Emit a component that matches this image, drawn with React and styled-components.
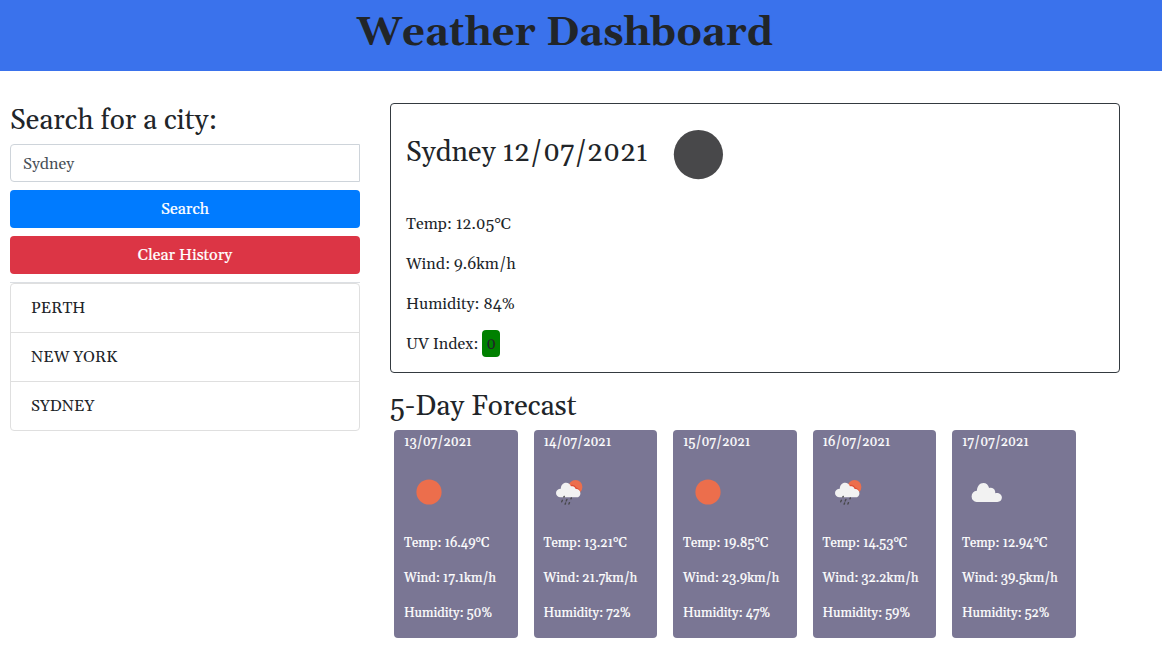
import React from "react";
import styled, { createGlobalStyle } from "styled-components";

const GlobalStyle = createGlobalStyle`
  *, *::before, *::after { box-sizing: border-box; }
  body {
    margin: 0;
    background: #fff;
    color: #212529;
    font-family: Georgia, Gelasio, "Liberation Serif", serif;
    font-size: 16px;
    line-height: 24px;
  }
  h1, h2, p, ul { margin: 0; padding: 0; font-weight: 400; }
`;

const Header = styled.header`
  height: 71px;
  padding: 10px 32px 0 0;
  background: #3a72ec;
  text-align: center;
`;

const Title = styled.h1`
  && { font-weight: 700; }
  font-size: 40px;
  line-height: 48px;
`;

const Layout = styled.main`
  display: flex;
  align-items: flex-start;
  gap: 30px;
  padding: 32px 42px 0 10px;
`;

const Sidebar = styled.aside`
  display: flex;
  flex-direction: column;
  width: 350px;
`;

const Heading = styled.h2`
  font-size: 28px;
  line-height: 34px;
  white-space: nowrap;
`;

const SearchHeading = styled(Heading)`
  margin-top: 1px;
`;

const SearchInput = styled.input`
  height: 38px;
  margin: 6px 0 8px;
  padding: 7px 12px 5px;
  border: 1px solid #ced4da;
  border-radius: 4px 0 0 4px;
  color: #495057;
  font: inherit;
  outline: none;
`;

const Button = styled.button`
  height: 38px;
  margin-bottom: 8px;
  padding: 0;
  border: 0;
  border-radius: 4px;
  background: ${(p) => p.$color};
  color: #fff;
  font: inherit;
  -webkit-text-stroke: 0.2px #fff;
`;

const HistoryWrap = styled.div`
  border-top: 1px solid #dcdfe3;
`;

const History = styled.ul`
  list-style: none;
  border: 1px solid #dfdfdf;
  border-radius: 4px;
`;

const HistoryItem = styled.li`
  height: ${(p) => (p.$last ? 48 : 49)}px;
  padding: 12px 20px;
  border-bottom: ${(p) => (p.$last ? "0" : "1px solid #dfdfdf")};
`;

const Content = styled.section`
  flex: 1;
`;

const Current = styled.article`
  height: 270px;
  padding: 0 15px;
  border: 1px solid #343a40;
  border-radius: 4px;
`;

const CurrentTop = styled.div`
  display: flex;
  align-items: flex-start;
  height: 108px;
`;

const CurrentHeading = styled(Heading)`
  width: 242px;
  margin-top: 32px;
`;

const Line = styled.p`
  margin-bottom: 16px;
`;

const UvBadge = styled.span`
  display: inline-block;
  height: 27px;
  margin: -2px 0;
  padding: 2px 4px;
  border-radius: 4px;
  background: green;
`;

const ForecastHeading = styled(Heading)`
  margin: 17px 0 6px;
`;

const Forecast = styled.div`
  display: flex;
  gap: 16px;
  padding-left: 4px;
`;

const Day = styled.article`
  width: 123.5px;
  height: 208px;
  padding: 2px 10px 0;
  border-radius: 4px;
  background: #7a7694;
  color: #fff;
  font-size: 13px;
  line-height: 21px;
  white-space: nowrap;
  -webkit-text-stroke: 0.2px #fff;
`;

const DayIcon = styled.div`
  height: 50px;
  margin: 14px 0 16px;
`;

const DayLine = styled.p`
  margin-bottom: 14px;
`;

const Svg = styled.svg`
  display: block;
  width: ${(p) => p.$size}px;
  height: ${(p) => p.$size}px;
`;

function WeatherIcon({ kind, size = 50 }) {
  return (
    <Svg viewBox="0 0 50 50" $size={size} aria-hidden="true">
      {kind === "night" && <circle cx="25.2" cy="25.3" r="12.3" fill="#48484a" />}
      {kind === "sun" && <circle cx="25" cy="25" r="12.6" fill="#ec6e4c" />}
      {kind === "cloud" && (
        <path
          d="M14.6 35a5 5.600 0 0 1 0-11.200h.3c.2-4.300 2.700-7.800 6.500-7.800 2.800 0 5 2 5.700 4.900 3-.8 5.500.8 6 3.300l.2 2c3.400-.7 6.600 1.200 6.600 4.400 0 2.600-1.900 4.400-4.500 4.400Z"
          fill="#f2f2f2"
        />
      )}
      {kind === "rain" && (
        <>
          <circle cx="31.5" cy="19.900" r="6.900" fill="#ec6e4c" />
          <path
            d="M25.8 19.300c1.900-1.700 5-.8 5.800 1.700 2.700.6 3.800 2.200 4 4.300"
            fill="none"
            stroke="#df4d34"
            strokeWidth="1.3"
          />
          <path
            d="M16.5 30.300c-2.500 0-4.500-1.700-4.500-4.300 0-2.700 2.200-4.300 4.800-4.300.1-3.500 2.200-5.900 5.300-5.900 2.400 0 4 1.300 4.800 3.500 2.400-.6 4.200.5 4.700 2.800 2.900-.2 4.800 1.600 4.800 4.300 0 2.400-1.500 3.900-4 3.900Z"
            fill="#f2f2f2"
          />
          <path
            d="M20.2 29.400l-.3 .7M18.400 33.300l-.7 1.500M22.900 32.500l-.7 1.500M27.300 31l-.3 .8M21.600 36l-.5 1.200M25.500 35.600l-.6 1.500"
            stroke="#48484a"
            strokeWidth="1.4"
            strokeLinecap="round"
          />
        </>
      )}
    </Svg>
  );
}

const cities = ["PERTH", "NEW YORK", "SYDNEY"];

const days = [
  { date: "13/07/2021", icon: "sun", temp: "16.49", wind: "17.1", humidity: 50 },
  { date: "14/07/2021", icon: "rain", temp: "13.21", wind: "21.7", humidity: 72 },
  { date: "15/07/2021", icon: "sun", temp: "19.85", wind: "23.9", humidity: 47 },
  { date: "16/07/2021", icon: "rain", temp: "14.53", wind: "32.2", humidity: 59 },
  { date: "17/07/2021", icon: "cloud", temp: "12.94", wind: "39.5", humidity: 52 },
];

export default function App() {
  return (
    <>
      <GlobalStyle />
      <Header>
        <Title>Weather Dashboard</Title>
      </Header>
      <Layout>
        <Sidebar>
          <SearchHeading>Search for a city:</SearchHeading>
          <SearchInput defaultValue="Sydney" aria-label="City" />
          <Button $color="#007bff">Search</Button>
          <Button $color="#dc3545">Clear History</Button>
          <HistoryWrap>
            <History>
              {cities.map((name, i) => (
                <HistoryItem key={name} $last={i === cities.length - 1}>
                  {name}
                </HistoryItem>
              ))}
            </History>
          </HistoryWrap>
        </Sidebar>
        <Content>
          <Current>
            <CurrentTop>
              <CurrentHeading>Sydney 12/07/2021</CurrentHeading>
              <WeatherIcon kind="night" size={100} />
            </CurrentTop>
            <Line>Temp: 12.05°C</Line>
            <Line>Wind: 9.6km/h</Line>
            <Line>Humidity: 84%</Line>
            <Line>
              UV Index: <UvBadge>0</UvBadge>
            </Line>
          </Current>
          <ForecastHeading>5-Day Forecast</ForecastHeading>
          <Forecast>
            {days.map((d) => (
              <Day key={d.date}>
                <p>{d.date}</p>
                <DayIcon>
                  <WeatherIcon kind={d.icon} />
                </DayIcon>
                <DayLine>Temp: {d.temp}°C</DayLine>
                <DayLine>Wind: {d.wind}km/h</DayLine>
                <DayLine>Humidity: {d.humidity}%</DayLine>
              </Day>
            ))}
          </Forecast>
        </Content>
      </Layout>
    </>
  );
}
